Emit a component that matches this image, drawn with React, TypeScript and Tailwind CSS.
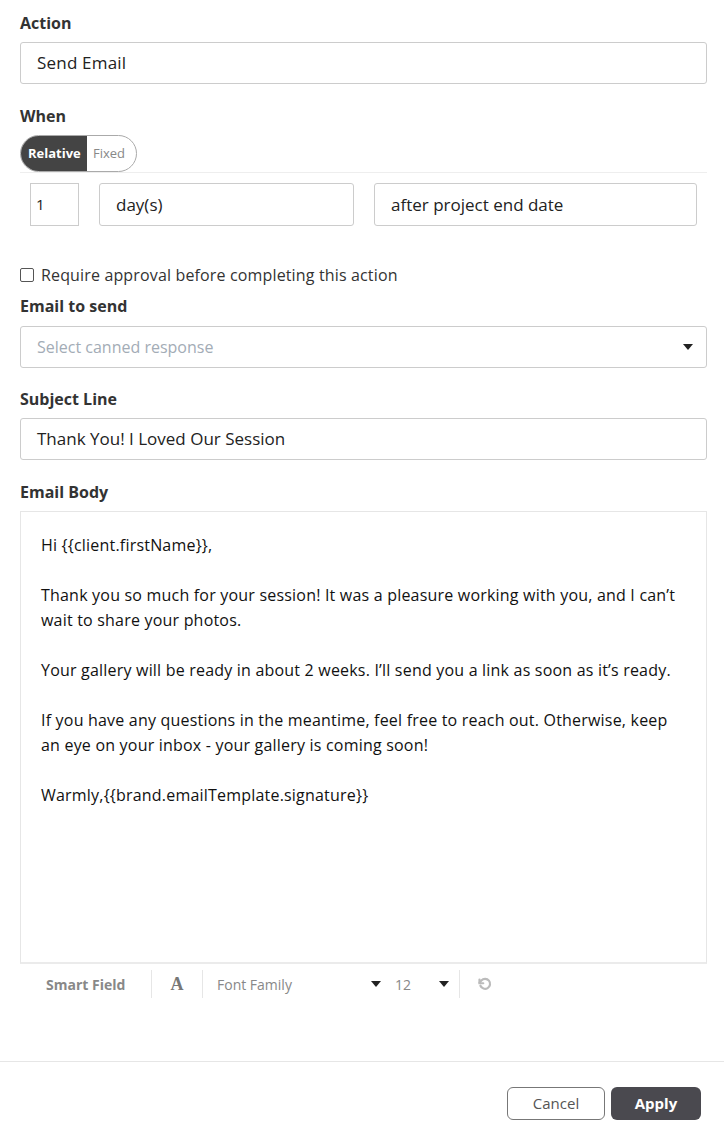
import React from "react";

const font = { fontFamily: "'Open Sans', Lato, sans-serif" };

function Label({ children, className = "" }: { children: React.ReactNode; className?: string }) {
  return <div className={`text-[16px] font-bold text-[#333] leading-[20px] ${className}`}>{children}</div>;
}

function Caret() {
  return (
    <svg width="10" height="6" viewBox="0 0 10 6"><path d="M0 0h10L5 6z" fill="#222" /></svg>
  );
}

export default function App() {
  return (
    <div className="w-[724px] h-[1131px] bg-white text-[#222] relative" style={font}>
      <div className="pl-5 pr-[17px] pt-[13px]">
        <Label>Action</Label>
        <div className="mt-[9px] h-[42px] border border-[#ccc] rounded-[3px] flex items-center pl-4 text-[17px] tracking-[0.2px] text-[#222]">Send Email</div>

        <Label className="mt-[22px]">When</Label>
        <div className="mt-[9px] flex">
          <div className="flex h-[37px] rounded-full border border-[#aaa] overflow-hidden text-[13px]">
            <div className="bg-[#444] text-white font-bold flex items-center px-[7px] w-[66px]">Relative</div>
            <div className="text-[#888] flex items-center pl-[6px] pr-[6px] w-[49px] rounded-r-full">Fixed</div>
          </div>
        </div>
        <div className="border-t border-[#eee]" />
        <div className="flex pl-[10px] pt-[10px] pr-[10px] gap-5">
          <div className="w-[49px] h-[43px] border border-[#ccc] flex items-center pl-[5px] text-[15px]">1</div>
          <div className="w-[255px] h-[43px] border border-[#ccc] rounded-[3px] flex items-center pl-4 text-[17px]">day(s)</div>
          <div className="flex-1 h-[43px] border border-[#ccc] rounded-[3px] flex items-center pl-4 text-[17px]">after project end date</div>
        </div>

        <label className="mt-[39px] flex items-center gap-[7px] text-[16px] text-[#333] leading-[20px] tracking-[0.15px]">
          <span className="w-[14px] h-[14px] border border-[#555] rounded-[2px] bg-white" />
          <span>Require approval before completing this action</span>
        </label>

        <Label className="mt-[11px]">Email to send</Label>
        <div className="mt-[10px] h-[42px] border border-[#ccc] rounded-[3px] flex items-center pl-4 pr-[13px] text-[16px] text-[#a3acb6]">
          <span className="flex-1">Select canned response</span>
          <Caret />
        </div>

        <Label className="mt-[21px]">Subject Line</Label>
        <div className="mt-[9px] h-[42px] border border-[#ccc] rounded-[3px] flex items-center pl-4 text-[17px]">Thank You! I Loved Our Session</div>

        <Label className="mt-[22px]">Email Body</Label>
        <div className="mt-[9px] h-[453px] border border-[#e6e6e6] border-b-2 border-b-[#ebebeb] px-[20px] pt-[21px] text-[16px] leading-[25px] tracking-[0.2px] text-[#111]">
          <p>Hi {"{{client.firstName}}"},</p>
          <p className="mt-[25px]">Thank you so much for your session! It was a pleasure working with you, and I can’t wait to share your photos.</p>
          <p className="mt-[25px]">Your gallery will be ready in about 2 weeks. I’ll send you a link as soon as it’s ready.</p>
          <p className="mt-[25px]">If you have any questions in the meantime, feel free to reach out. Otherwise, keep an eye on your inbox - your gallery is coming soon!</p>
          <p className="mt-[25px]">Warmly,{"{{brand.emailTemplate.signature}}"}</p>
        </div>

        <div className="flex items-center h-[40px] text-[14px]">
          <div className="w-[131px] pl-[26px] font-bold text-[#888]">Smart Field</div>
          <div className="w-px h-[28px] bg-[#e6e6e6]" />
          <div className="w-[50px] flex justify-center text-[18px] font-bold text-[#777]" style={{ fontFamily: "'Liberation Serif', serif" }}>A</div>
          <div className="w-px h-[28px] bg-[#e6e6e6]" />
          <div className="w-[182px] pl-[14px] pr-[4px] flex items-center text-[#888]">
            <span className="flex-1">Font Family</span>
            <Caret />
          </div>
          <div className="w-[74px] pl-[10px] pr-[10px] flex items-center text-[#888]">
            <span className="flex-1">12</span>
            <Caret />
          </div>
          <div className="w-px h-[28px] bg-[#e6e6e6]" />
          <div className="pl-[17px] flex items-center">
            <svg width="15" height="15" viewBox="0 0 24 24" fill="none" stroke="#bbb" strokeWidth="3.5" strokeLinecap="round">
              <path d="M4 4v6h6" />
              <path d="M5.5 14a8 8 0 1 0 1.5-8.5L4 9" />
            </svg>
          </div>
        </div>
      </div>

      <div className="absolute left-0 right-0 top-[1061px] border-t border-[#e6e6e6]" />
      <div className="absolute top-[1087px] right-[23px] flex gap-[6px]">
        <button className="w-[98px] h-[33px] border border-[#777] rounded-[6px] text-[15px] text-[#555] bg-white">Cancel</button>
        <button className="w-[90px] h-[33px] rounded-[6px] text-[15px] font-bold text-white bg-[#4a494f]">Apply</button>
      </div>
    </div>
  );
}
